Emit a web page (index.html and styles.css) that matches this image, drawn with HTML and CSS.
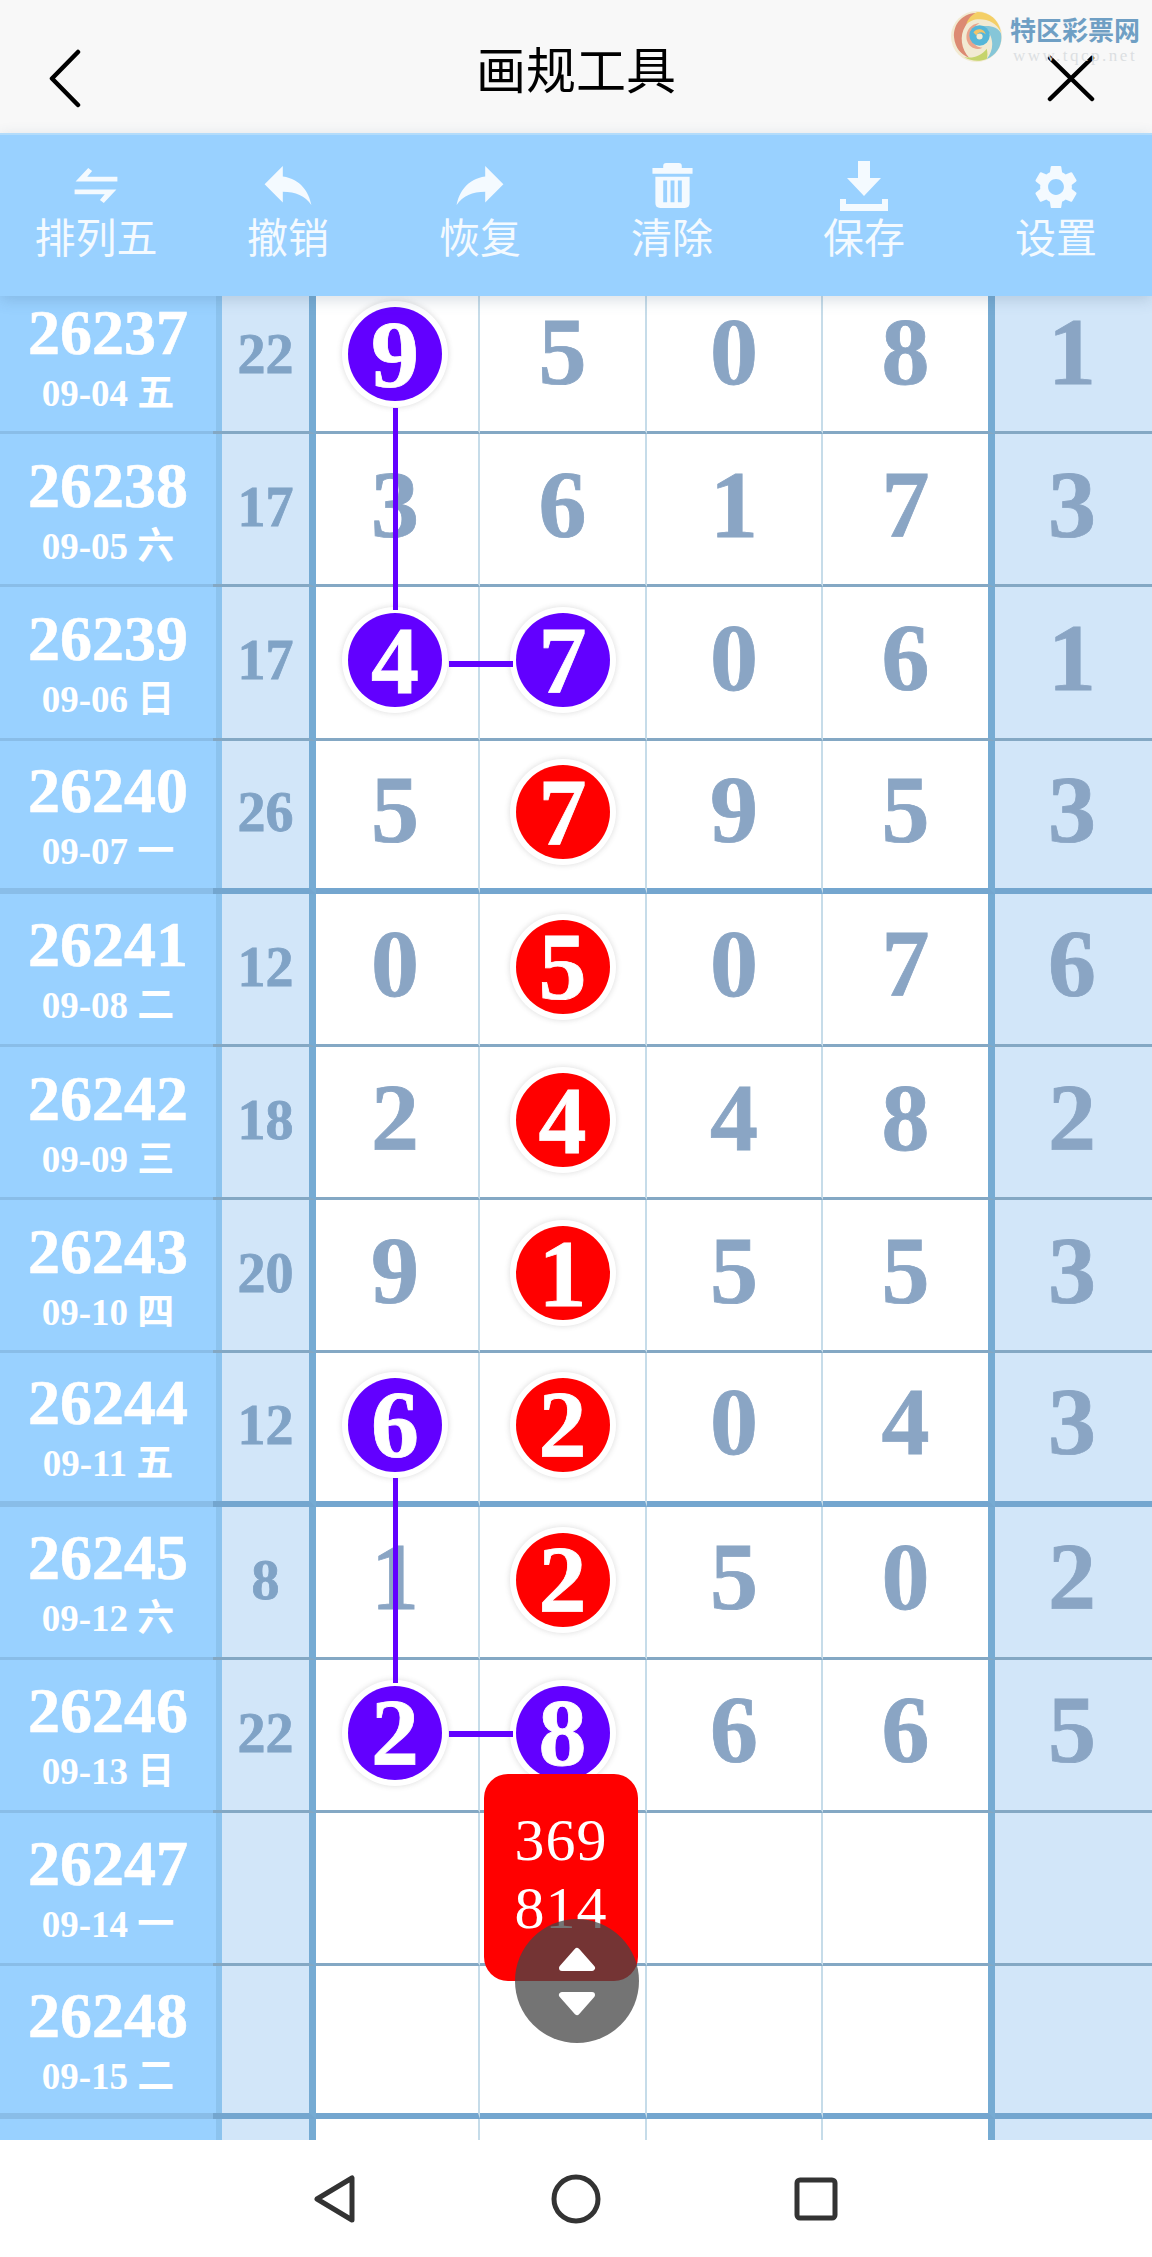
FILE: index.html
```html
<!DOCTYPE html>
<html lang="zh">

<head>
    <meta charset="UTF-8">
    <title>画规工具</title>
    <link rel="stylesheet" href="styles.css">
</head>

<body>
    <div class="page">
        <header class="top">
            <svg class="back" viewBox="0 0 34 59"><path d="M30 3 L4 29.500 L30 56"/></svg>
            <h1>画规工具</h1>
            <svg class="close" viewBox="0 0 50 47"><path d="M4 3 L46 44 M46 3 L4 44"/></svg>
            <div class="logo">
                <svg viewBox="0 0 50 50">
                    <circle cx="25" cy="25" r="25" fill="#f2ead2"/>
                    <path d="M24 2 C10 3 2 14 3 26 C4 36 10 43 18 46 C10 38 8 24 14 15 C17 10 22 6 30 5 Z" fill="#dc8a72"/>
                    <path d="M26 1 C38 1 47 9 49 21 C45 12 37 8 28 8 C22 8 18 10 15 13 C17 7 21 3 26 1 Z" fill="#f4cf66"/>
                    <path d="M49 22 C51 33 45 43 35 47 C40 41 42 33 39 25 C37 20 34 17 31 15 C39 14 46 16 49 22 Z" fill="#86c6d8"/>
                    <path d="M35 47 C28 50 19 49 13 45 C21 47 30 44 35 37 C36 41 36 44 35 47 Z" fill="#c6d46c"/>
                    <path d="M16 30 C13 21 19 12 28 12 C22 15 19 21 21 28 C22 33 26 36 31 36 C25 39 18 36 16 30 Z" fill="#e9a58c"/>
                    <circle cx="28" cy="24" r="10" fill="#55b6d8"/>
                    <path d="M22 21 C25 16 33 17 34 23 C31 20 27 20 25 24 Z" fill="#f1c46a"/>
                    <circle cx="28" cy="25" r="3" fill="#f3ecd2"/>
                </svg>
                <div class="logo-text">
                    <b>特区彩票网</b>
                    <span>www.tqcp.net</span>
                </div>
            </div>
        </header>

        <nav class="tools">
            <div class="tool">
                <svg class="i-swap" viewBox="0 0 44 36"><path d="M14 0 L18 3 L13 9 L44 9 L44 14 L1 14 Z M30 36 L26 33 L31 27 L0 27 L0 22 L43 22 Z"/></svg>
                <span>排列五</span>
            </div>
            <div class="tool">
                <svg class="i-arrow" viewBox="3 5 18 15"><path d="M10 9V5l-7 7 7 7v-4.100c5 0 8.500 1.600 11 5.100-1-5-4-10-11-11z"/></svg>
                <span>撤销</span>
            </div>
            <div class="tool">
                <svg class="i-arrow" viewBox="3 5 18 15"><path d="M14 9V5l7 7-7 7v-4.100c-5 0-8.500 1.600-11 5.100 1-5 4-10 11-11z"/></svg>
                <span>恢复</span>
            </div>
            <div class="tool">
                <svg class="i-trash" viewBox="0 0 41 46"><path d="M14 0 H27 Q30 0 30 3 V5 H41 V11 H0 V5 H11 V3 Q11 0 14 0 Z M3 14 H38 V41 Q38 46 33 46 H8 Q3 46 3 41 Z M11 18 V40 H15 V18 Z M18.500 18 V40 H22.500 V18 Z M26 18 V40 H30 V18 Z" fill-rule="evenodd"/></svg>
                <span>清除</span>
            </div>
            <div class="tool">
                <svg class="i-save" viewBox="0 0 48 50"><path d="M18 0 H30 V17 H41 L24 35 L7 17 H18 Z M0 38 H6 V43 H42 V38 H48 V50 H0 Z"/></svg>
                <span>保存</span>
            </div>
            <div class="tool">
                <svg class="i-gear" viewBox="2.500 2 19 20"><path d="M19.140 12.940c.04-.3.06-.61.06-.94 0-.32-.02-.64-.07-.94l2.030-1.580c.18-.14.23-.41.12-.61l-1.920-3.320c-.12-.22-.37-.29-.59-.22l-2.390.96c-.5-.38-1.030-.7-1.620-.94l-.36-2.540c-.04-.24-.24-.41-.48-.41h-3.840c-.24 0-.43.17-.47.41l-.36 2.540c-.59.24-1.130.57-1.620.94l-2.390-.96c-.22-.08-.47 0-.59.22L2.740 8.870c-.12.21-.08.47.12.61l2.030 1.580c-.05.3-.09.63-.09.94s.02.64.07.94l-2.030 1.580c-.18.14-.23.41-.12.61l1.920 3.320c.12.22.37.29.59.22l2.390-.96c.5.38 1.030.7 1.620.94l.36 2.540c.05.24.24.41.48.41h3.840c.24 0 .44-.17.47-.41l.36-2.540c.59-.24 1.130-.56 1.620-.94l2.390.96c.22.08.47 0 .59-.22l1.920-3.320c.12-.22.07-.47-.12-.61l-2.010-1.580zM12 15.600c-1.980 0-3.600-1.620-3.600-3.600s1.620-3.600 3.600-3.600 3.600 1.620 3.600 3.600-1.620 3.600-3.600 3.600z"/></svg>
                <span>设置</span>
            </div>
        </nav>

        <main class="board">
            <div class="rows">
                <div class="row">
                    <div class="issue"><b>26237</b><span>09-04 五</span></div>
                    <div class="sum">22</div>
                    <div class="cell"><span class="ball blue">9</span></div><div class="cell">5</div><div class="cell">0</div><div class="cell end">8</div>
                    <div class="extra">1</div>
                </div>
                <div class="row">
                    <div class="issue"><b>26238</b><span>09-05 六</span></div>
                    <div class="sum">17</div>
                    <div class="cell">3</div><div class="cell">6</div><div class="cell">1</div><div class="cell end">7</div>
                    <div class="extra">3</div>
                </div>
                <div class="row">
                    <div class="issue"><b>26239</b><span>09-06 日</span></div>
                    <div class="sum">17</div>
                    <div class="cell"><span class="ball blue">4</span></div><div class="cell"><span class="ball blue">7</span></div><div class="cell">0</div><div class="cell end">6</div>
                    <div class="extra">1</div>
                </div>
                <div class="row thick">
                    <div class="issue"><b>26240</b><span>09-07 一</span></div>
                    <div class="sum">26</div>
                    <div class="cell">5</div><div class="cell"><span class="ball red">7</span></div><div class="cell">9</div><div class="cell end">5</div>
                    <div class="extra">3</div>
                </div>
                <div class="row">
                    <div class="issue"><b>26241</b><span>09-08 二</span></div>
                    <div class="sum">12</div>
                    <div class="cell">0</div><div class="cell"><span class="ball red">5</span></div><div class="cell">0</div><div class="cell end">7</div>
                    <div class="extra">6</div>
                </div>
                <div class="row">
                    <div class="issue"><b>26242</b><span>09-09 三</span></div>
                    <div class="sum">18</div>
                    <div class="cell">2</div><div class="cell"><span class="ball red">4</span></div><div class="cell">4</div><div class="cell end">8</div>
                    <div class="extra">2</div>
                </div>
                <div class="row">
                    <div class="issue"><b>26243</b><span>09-10 四</span></div>
                    <div class="sum">20</div>
                    <div class="cell">9</div><div class="cell"><span class="ball red">1</span></div><div class="cell">5</div><div class="cell end">5</div>
                    <div class="extra">3</div>
                </div>
                <div class="row thick">
                    <div class="issue"><b>26244</b><span>09-11 五</span></div>
                    <div class="sum">12</div>
                    <div class="cell"><span class="ball blue">6</span></div><div class="cell"><span class="ball red">2</span></div><div class="cell">0</div><div class="cell end">4</div>
                    <div class="extra">3</div>
                </div>
                <div class="row">
                    <div class="issue"><b>26245</b><span>09-12 六</span></div>
                    <div class="sum">8</div>
                    <div class="cell">1</div><div class="cell"><span class="ball red">2</span></div><div class="cell">5</div><div class="cell end">0</div>
                    <div class="extra">2</div>
                </div>
                <div class="row">
                    <div class="issue"><b>26246</b><span>09-13 日</span></div>
                    <div class="sum">22</div>
                    <div class="cell"><span class="ball blue">2</span></div><div class="cell"><span class="ball blue">8</span></div><div class="cell">6</div><div class="cell end">6</div>
                    <div class="extra">5</div>
                </div>
                <div class="row">
                    <div class="issue"><b>26247</b><span>09-14 一</span></div>
                    <div class="sum"></div>
                    <div class="cell"></div><div class="cell"></div><div class="cell"></div><div class="cell end"></div>
                    <div class="extra"></div>
                </div>
                <div class="row thick">
                    <div class="issue"><b>26248</b><span>09-15 二</span></div>
                    <div class="sum"></div>
                    <div class="cell"></div><div class="cell"></div><div class="cell"></div><div class="cell end"></div>
                    <div class="extra"></div>
                </div>
                <div class="row">
                    <div class="issue"></div>
                    <div class="sum"></div>
                    <div class="cell"></div><div class="cell"></div><div class="cell"></div><div class="cell end"></div>
                    <div class="extra"></div>
                </div>
            </div>

            <!-- 连线 -->
            <i class="link v1"></i>
            <i class="link h1"></i>
            <i class="link v2"></i>
            <i class="link h2"></i>

            <div class="pop">369<br>814</div>
            <div class="scroll-btn">
                <svg viewBox="0 0 38 69"><path d="M19 4 L34 21 H4 Z M4 48 H34 L19 65 Z"/></svg>
            </div>
        </main>

        <footer class="sys">
            <svg class="sys-back" viewBox="0 0 42 48"><path d="M38 3 V45 L3 24 Z"/></svg>
            <svg class="sys-home" viewBox="0 0 50 50"><circle cx="25" cy="25" r="22"/></svg>
            <svg class="sys-task" viewBox="0 0 44 44"><rect x="3" y="3" width="38" height="38" rx="3"/></svg>
        </footer>
    </div>
</body>

</html>
```

FILE: styles.css
```css
* {
    box-sizing: border-box;
}

body {
    margin: 0;
    background: #fff;
}

.page {
    width: 1152px;
    height: 2257px;
    display: flex;
    flex-direction: column;
    overflow: hidden;
    font-family: "Liberation Serif", "Noto Sans CJK SC", serif;
}

/* 顶部标题栏 */
.top {
    position: relative;
    height: 133px;
    flex: none;
    display: flex;
    align-items: center;
    justify-content: center;
    background: #f8f8f8;
}

.top h1 {
    margin: 0;
    font: 400 50px/60px "Noto Sans CJK SC", sans-serif;
    color: #000;
}

.back {
    position: absolute;
    left: 48px;
    top: 49px;
    width: 34px;
    height: 59px;
}

.close {
    position: absolute;
    left: 1046px;
    top: 55px;
    width: 50px;
    height: 47px;
}

.back path,
.close path {
    fill: none;
    stroke: #000;
    stroke-width: 4.500;
    stroke-linecap: round;
    stroke-linejoin: round;
}

.logo {
    position: absolute;
    left: 951px;
    top: 11px;
    display: flex;
    gap: 8px;
}

.logo svg {
    width: 51px;
    height: 51px;
}

.logo-text {
    display: flex;
    flex-direction: column;
    align-items: center;
}

.logo-text b {
    font: 700 26px/30px "Noto Sans CJK SC", sans-serif;
    margin-top: 3px;
    color: #6f9fc4;
}

.logo-text span {
    margin-top: 3px;
    font: 400 17px/18px "Liberation Serif", serif;
    letter-spacing: 2.500px;
    color: #dcdfe2;
}

/* 工具栏 */
.tools {
    position: relative;
    z-index: 2;
    height: 163px;
    flex: none;
    display: grid;
    grid-template-columns: repeat(6, 1fr);
    background: #99d1ff;
    border-top: 2px solid #b3dcfb;
    box-shadow: 0 4px 14px rgba(60, 90, 120, .2);
}

.tool {
    display: flex;
    flex-direction: column;
    align-items: center;
    padding-top: 26px;
    color: #f4faff;
}

.tool svg {
    height: 50px;
    fill: #f4faff;
}

.i-swap {
    width: 44px;
    padding: 7px 0 8px;
}

.i-arrow {
    width: 50px;
    padding: 5px 0 6px;
}

.i-trash {
    width: 41px;
    padding: 2px 0 3px;
}

.i-save {
    width: 48px;
}

.i-gear {
    width: 46px;
    padding: 4px 0 2px;
}

.tool span {
    font: 400 41px/48px "Noto Sans CJK SC", sans-serif;
}

/* 走势表 */
.board {
    position: relative;
    flex: 1;
    overflow: hidden;
    background: #fff;
}

.rows {
    margin-top: -15px;
}

.row {
    display: grid;
    grid-template-columns: 222px 94px 164px 167px 176px 172px 157px;
    height: 153.200px;
}

.row > div {
    border-bottom: 3px solid #84a8c4;
}

.row.thick > div {
    border-bottom: 6px solid #74a6cf;
}

.issue {
    display: flex;
    flex-direction: column;
    align-items: center;
    justify-content: center;
    padding-top: 6px;
    background: #99d1ff;
    border-right: 6px solid #8cc3ee;
    color: #fff;
}

.row > .issue,
.row.thick > .issue {
    border-bottom-color: #89bde8;
}

.issue b {
    font: 700 64px/66px "Liberation Serif", "Noto Sans CJK SC", serif;
    -webkit-text-stroke: .6px #fff;
}

.issue span {
    margin-top: 3px;
    font: 700 37px/50px "Liberation Serif", "Noto Sans CJK SC", serif;
}

.sum,
.cell,
.extra {
    display: flex;
    align-items: center;
    justify-content: center;
    padding-bottom: 10px;
    font-weight: 700;
    color: #8aa5c4;
    -webkit-text-stroke: .8px currentColor;
}

.sum {
    position: relative;
    padding-bottom: 4px;
    font-size: 56px;
    background: #d2e6f9;
    border-right: 7px solid #76abd3;
    color: #80a3c6;
}

/* 横线往左多伸出一点 */
.sum::after {
    content: "";
    position: absolute;
    left: -9px;
    bottom: -3px;
    width: 9px;
    height: 3px;
    background: #84a8c4;
}

.thick .sum::after {
    bottom: -6px;
    height: 6px;
    background: #74a6cf;
}

.cell {
    font-size: 96px;
    border-right: 2px solid #c6dce9;
}

.cell:nth-child(3) {
    padding-right: 4px;
}

.cell.end {
    border-right: 7px solid #76abd3;
}

.extra {
    padding-right: 3px;
    font-size: 96px;
    background: #d2e6f9;
}

.ball {
    width: 94px;
    height: 94px;
    margin-top: 6px;
    border-radius: 50%;
    display: flex;
    align-items: center;
    justify-content: center;
    color: #fff;
    -webkit-text-stroke: .8px #fff;
    box-shadow: 0 0 0 6px #fff, 0 0 5px 7px rgba(90, 90, 90, .16);
}

.ball.blue {
    background: #6200ff;
}

.ball.red {
    background: #f00;
}

.link {
    position: absolute;
    background: #6200ff;
}

.link.v1 {
    left: 393px;
    top: 112px;
    width: 5px;
    height: 202px;
}

.link.h1 {
    left: 449px;
    top: 365px;
    width: 64px;
    height: 6px;
}

.link.v2 {
    left: 393px;
    top: 1182px;
    width: 5px;
    height: 205px;
}

.link.h2 {
    left: 449px;
    top: 1435px;
    width: 64px;
    height: 6px;
}

.pop {
    position: absolute;
    left: 484px;
    top: 1478px;
    width: 154px;
    height: 207px;
    padding-top: 32px;
    border-radius: 24px;
    background: #f00;
    color: #fff;
    font-size: 60px;
    line-height: 68px;
    letter-spacing: 1px;
    text-align: center;
}

.scroll-btn {
    position: absolute;
    left: 515px;
    top: 1623px;
    width: 124px;
    height: 124px;
    border-radius: 50%;
    display: flex;
    align-items: center;
    justify-content: center;
    background: rgba(70, 70, 70, .75);
}

.scroll-btn svg {
    width: 38px;
    height: 69px;
}

.scroll-btn path {
    fill: #fff;
    stroke: #fff;
    stroke-width: 6;
    stroke-linejoin: round;
}

/* 系统导航条 */
.sys {
    position: relative;
    height: 117px;
    flex: none;
    background: #fff;
    display: flex;
    align-items: center;
    padding: 0 0 0 314px;
}

.sys svg {
    fill: none;
    stroke: #333;
    stroke-width: 5;
    stroke-linejoin: round;
}

.sys-back {
    width: 42px;
    height: 48px;
    margin-right: 195px;
}

.sys-home {
    width: 50px;
    height: 50px;
    margin-right: 193px;
}

.sys-task {
    width: 44px;
    height: 44px;
}
```
